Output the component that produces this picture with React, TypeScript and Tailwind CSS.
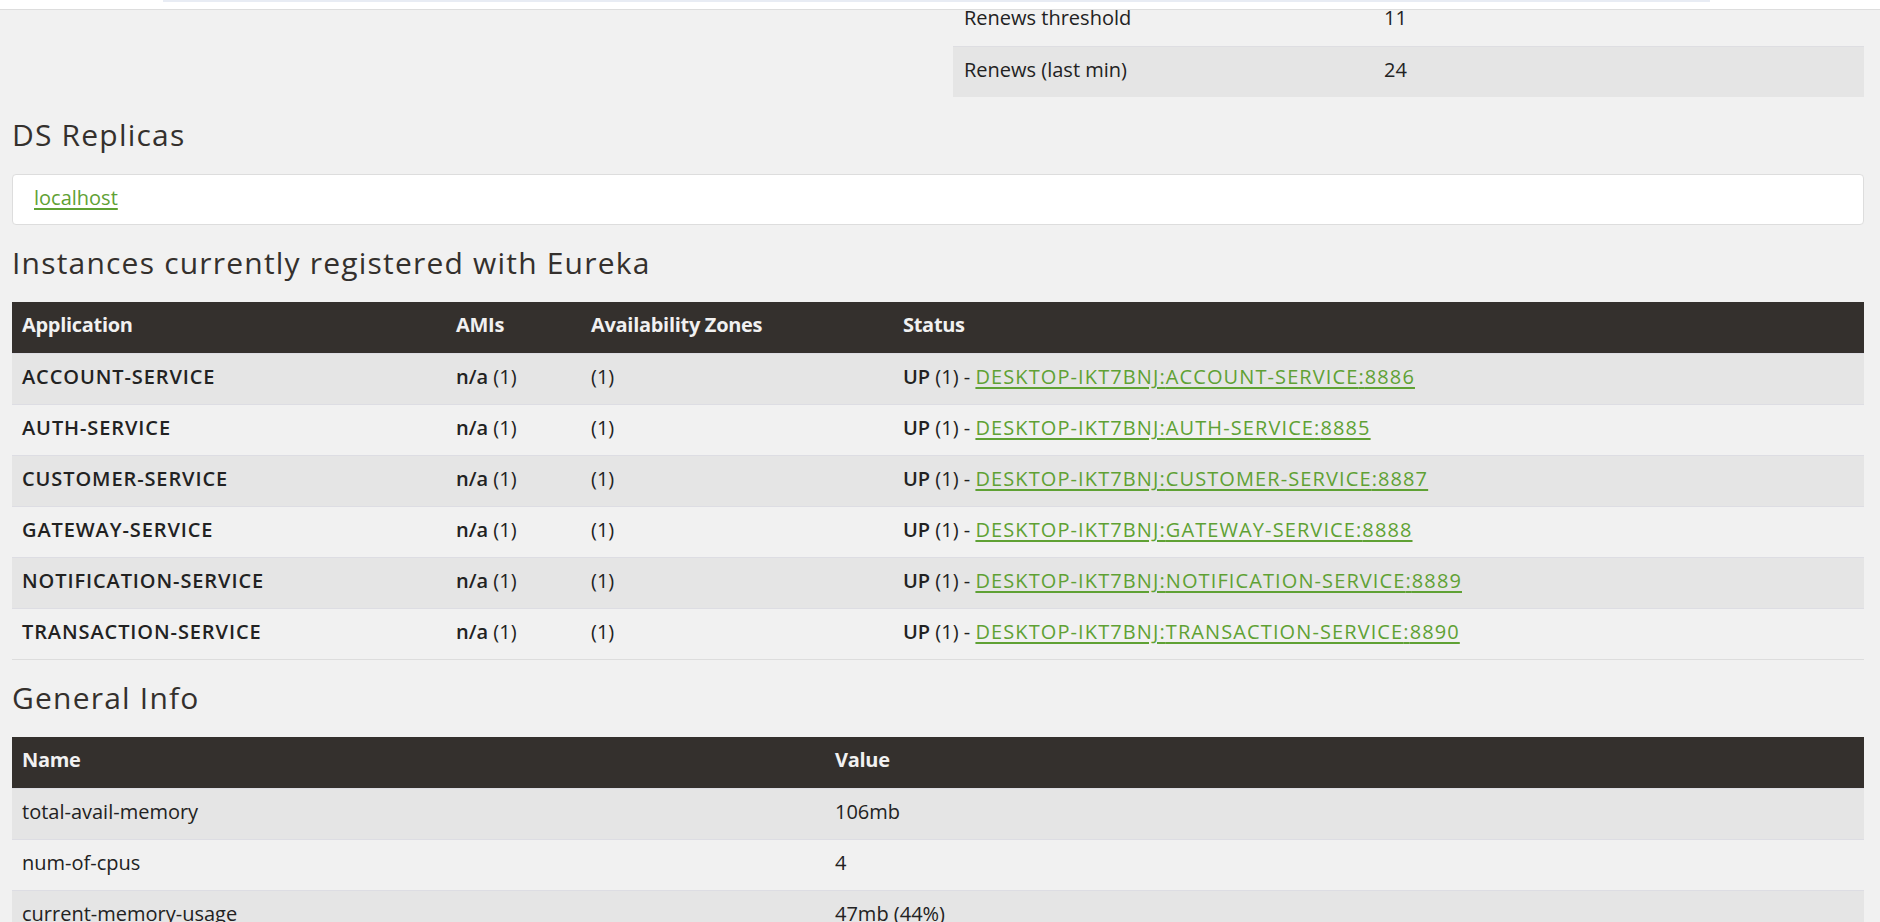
import React from 'react'

const instances = [
  { app: 'ACCOUNT-SERVICE', port: 8886 },
  { app: 'AUTH-SERVICE', port: 8885 },
  { app: 'CUSTOMER-SERVICE', port: 8887 },
  { app: 'GATEWAY-SERVICE', port: 8888 },
  { app: 'NOTIFICATION-SERVICE', port: 8889 },
  { app: 'TRANSACTION-SERVICE', port: 8890 },
]

const generalInfo = [
  { name: 'total-avail-memory', value: '106mb' },
  { name: 'num-of-cpus', value: '4' },
  { name: 'current-memory-usage', value: '47mb (44%)' },
]

function Heading({ children }: { children: React.ReactNode }) {
  return (
    <h2 className="mt-[21px] mb-[23px] text-[30px] leading-[33px] font-normal text-[#34302d] tracking-[1.2px]">
      {children}
    </h2>
  )
}

export default function App() {
  return (
    <div
      className="min-h-screen bg-[#f1f1f1] text-[20px] text-[#222]"
      style={{ fontFamily: '"Open Sans", sans-serif' }}
    >
      {/* top navbar edge */}
      <div className="h-[10px] bg-white border-b border-[#dddddd]">
        <div className="ml-[163px] w-[1547px] h-[2px] bg-[#e8ecf4]" />
      </div>

      <div className="pl-[12px] pr-[16px]">
        {/* system status (bottom of right table) */}
        <div className="flex">
          <div className="flex-1" />
          <div className="w-[911px]">
            <div className="flex h-[36px] items-center pb-[20px] bg-[#f1f1f1]">
              <div className="w-[420px] pl-[11px]">Renews threshold</div>
              <div className="pl-[11px]">11</div>
            </div>
            <div className="flex h-[51px] items-center pb-[5px] bg-[#e5e5e5] border-t border-[#dedee2]">
              <div className="w-[420px] pl-[11px]">Renews (last min)</div>
              <div className="pl-[11px]">24</div>
            </div>
          </div>
        </div>

        <Heading>DS Replicas</Heading>
        <div className="h-[51px] flex items-center pb-[4px] pl-[21px] bg-white border border-[#dddddd] rounded-[4px]">
          <a href="#" className="text-[#5fa134] underline underline-offset-[3px]">localhost</a>
        </div>

        <Heading>Instances currently registered with Eureka</Heading>
        <div className="border-b border-[#dddddd]">
          <div className="flex h-[51px] items-center pb-[5px] bg-[#34302d] text-[#f1f1f1] font-bold tracking-[-0.3px]">
            <div className="w-[434px] pl-[10px]">Application</div>
            <div className="w-[135px] pl-[10px]">AMIs</div>
            <div className="w-[312px] pl-[10px]">Availability Zones</div>
            <div className="pl-[10px]">Status</div>
          </div>
          {instances.map((row, i) => (
            <div
              key={row.app}
              className={`flex h-[51px] items-center pb-[5px] border-t border-[#dddde3] ${i % 2 === 0 ? 'bg-[#e5e5e5]' : 'bg-[#f1f1f1]'}`}
            >
              <div className="w-[434px] pl-[10px] font-semibold tracking-[0.9px]">{row.app}</div>
              <div className="w-[135px] pl-[10px]">
                <span className="font-semibold">n/a</span> (1)
              </div>
              <div className="w-[312px] pl-[10px]">(1)</div>
              <div className="pl-[10px]">
                <span className="font-semibold">UP</span> (1) -{' '}
                <a href="#" className="text-[#5fa134] underline underline-offset-[3px] tracking-[1.1px]">
                  DESKTOP-IKT7BNJ:{row.app}:{row.port}
                </a>
              </div>
            </div>
          ))}
        </div>

        <Heading>General Info</Heading>
        <div>
          <div className="flex h-[51px] items-center pb-[5px] bg-[#34302d] text-[#f1f1f1] font-bold tracking-[-0.3px]">
            <div className="w-[813px] pl-[10px]">Name</div>
            <div className="pl-[10px]">Value</div>
          </div>
          {generalInfo.map((row, i) => (
            <div
              key={row.name}
              className={`flex h-[51px] items-center pb-[5px] border-t border-[#dddde3] ${i % 2 === 0 ? 'bg-[#e5e5e5]' : 'bg-[#f1f1f1]'}`}
            >
              <div className="w-[813px] pl-[10px]">{row.name}</div>
              <div className="pl-[10px]">{row.value}</div>
            </div>
          ))}
        </div>
      </div>
    </div>
  )
}
